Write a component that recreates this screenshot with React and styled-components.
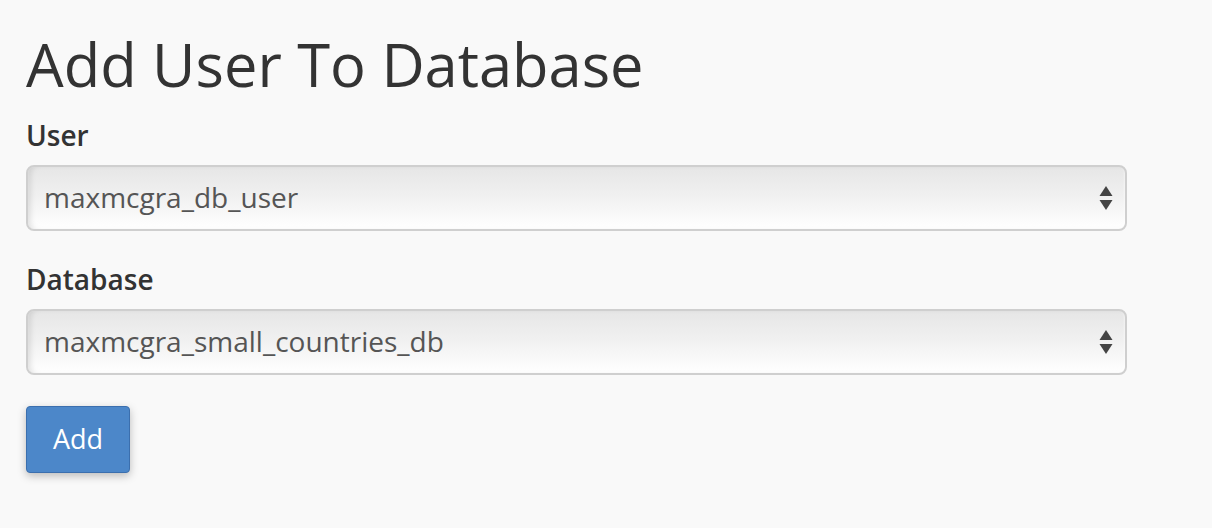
import React from 'react';
import styled, { createGlobalStyle } from 'styled-components';

const GlobalStyle = createGlobalStyle`
	html, body {
		margin: 0;
		padding: 0;
		background: #f9f9f9;
	}
	body {
		font-family: 'Open Sans', 'Noto Sans', sans-serif;
		color: #333;
	}
`;

const Page = styled.div`
	padding: 28px 85px 40px 26px;
	display: flex;
	flex-direction: column;
`;

const Title = styled.h1`
	margin: 0 0 17px 0;
	font-size: 59.6px;
	font-weight: 400;
	line-height: 72px;
	color: #333;
`;

const Field = styled.div`
	display: flex;
	flex-direction: column;
	gap: 12px;
	margin-bottom: 30px;
`;

const Label = styled.label`
	font-size: 28px;
	font-weight: 600;
	line-height: 36px;
	color: #333;
`;

const SelectBox = styled.div`
	position: relative;
	height: 66px;
	box-sizing: border-box;
	border: 2px solid #cfcfcf;
	border-radius: 8px;
	background: linear-gradient(to bottom, #e6e6e6 0%, #f0f0f0 45%, #ffffff 100%);
	box-shadow: inset 5px 0 6px -3px rgba(0, 0, 0, 0.13), inset 0 -2px 3px rgba(255, 255, 255, 0.9);
	display: flex;
	align-items: center;
	padding: 0 16px 3px;
	font-size: 28px;
	color: #555;
`;

const Arrows = styled.svg`
	position: absolute;
	right: 12px;
	top: 50%;
	transform: translateY(-50%);
`;

const AddButton = styled.button`
	align-self: flex-start;
	width: 104px;
	height: 67px;
	margin-top: 1px;
	border: 1px solid #3b6fae;
	border-radius: 4px;
	background: #4c87c9;
	color: #fff;
	font-family: 'Open Sans', 'Noto Sans', sans-serif;
	font-size: 27px;
	padding: 0 0 2px;
	box-shadow: 0 3px 9px rgba(0, 0, 0, 0.25);
	cursor: pointer;
`;

function Select({ value }) {
	return (
		<SelectBox>
			{value}
			<Arrows width="14" height="24" viewBox="0 0 14 24">
				<path d="M7 0 L13.5 10 L0.5 10 Z" fill="#444" />
				<path d="M0.5 14 L13.5 14 L7 24 Z" fill="#444" />
			</Arrows>
		</SelectBox>
	);
}

export default function App() {
	return (
		<>
			<GlobalStyle />
			<Page>
				<Title>Add User To Database</Title>
				<Field>
					<Label>User</Label>
					<Select value="maxmcgra_db_user" />
				</Field>
				<Field>
					<Label>Database</Label>
					<Select value="maxmcgra_small_countries_db" />
				</Field>
				<AddButton>Add</AddButton>
			</Page>
		</>
	);
}
